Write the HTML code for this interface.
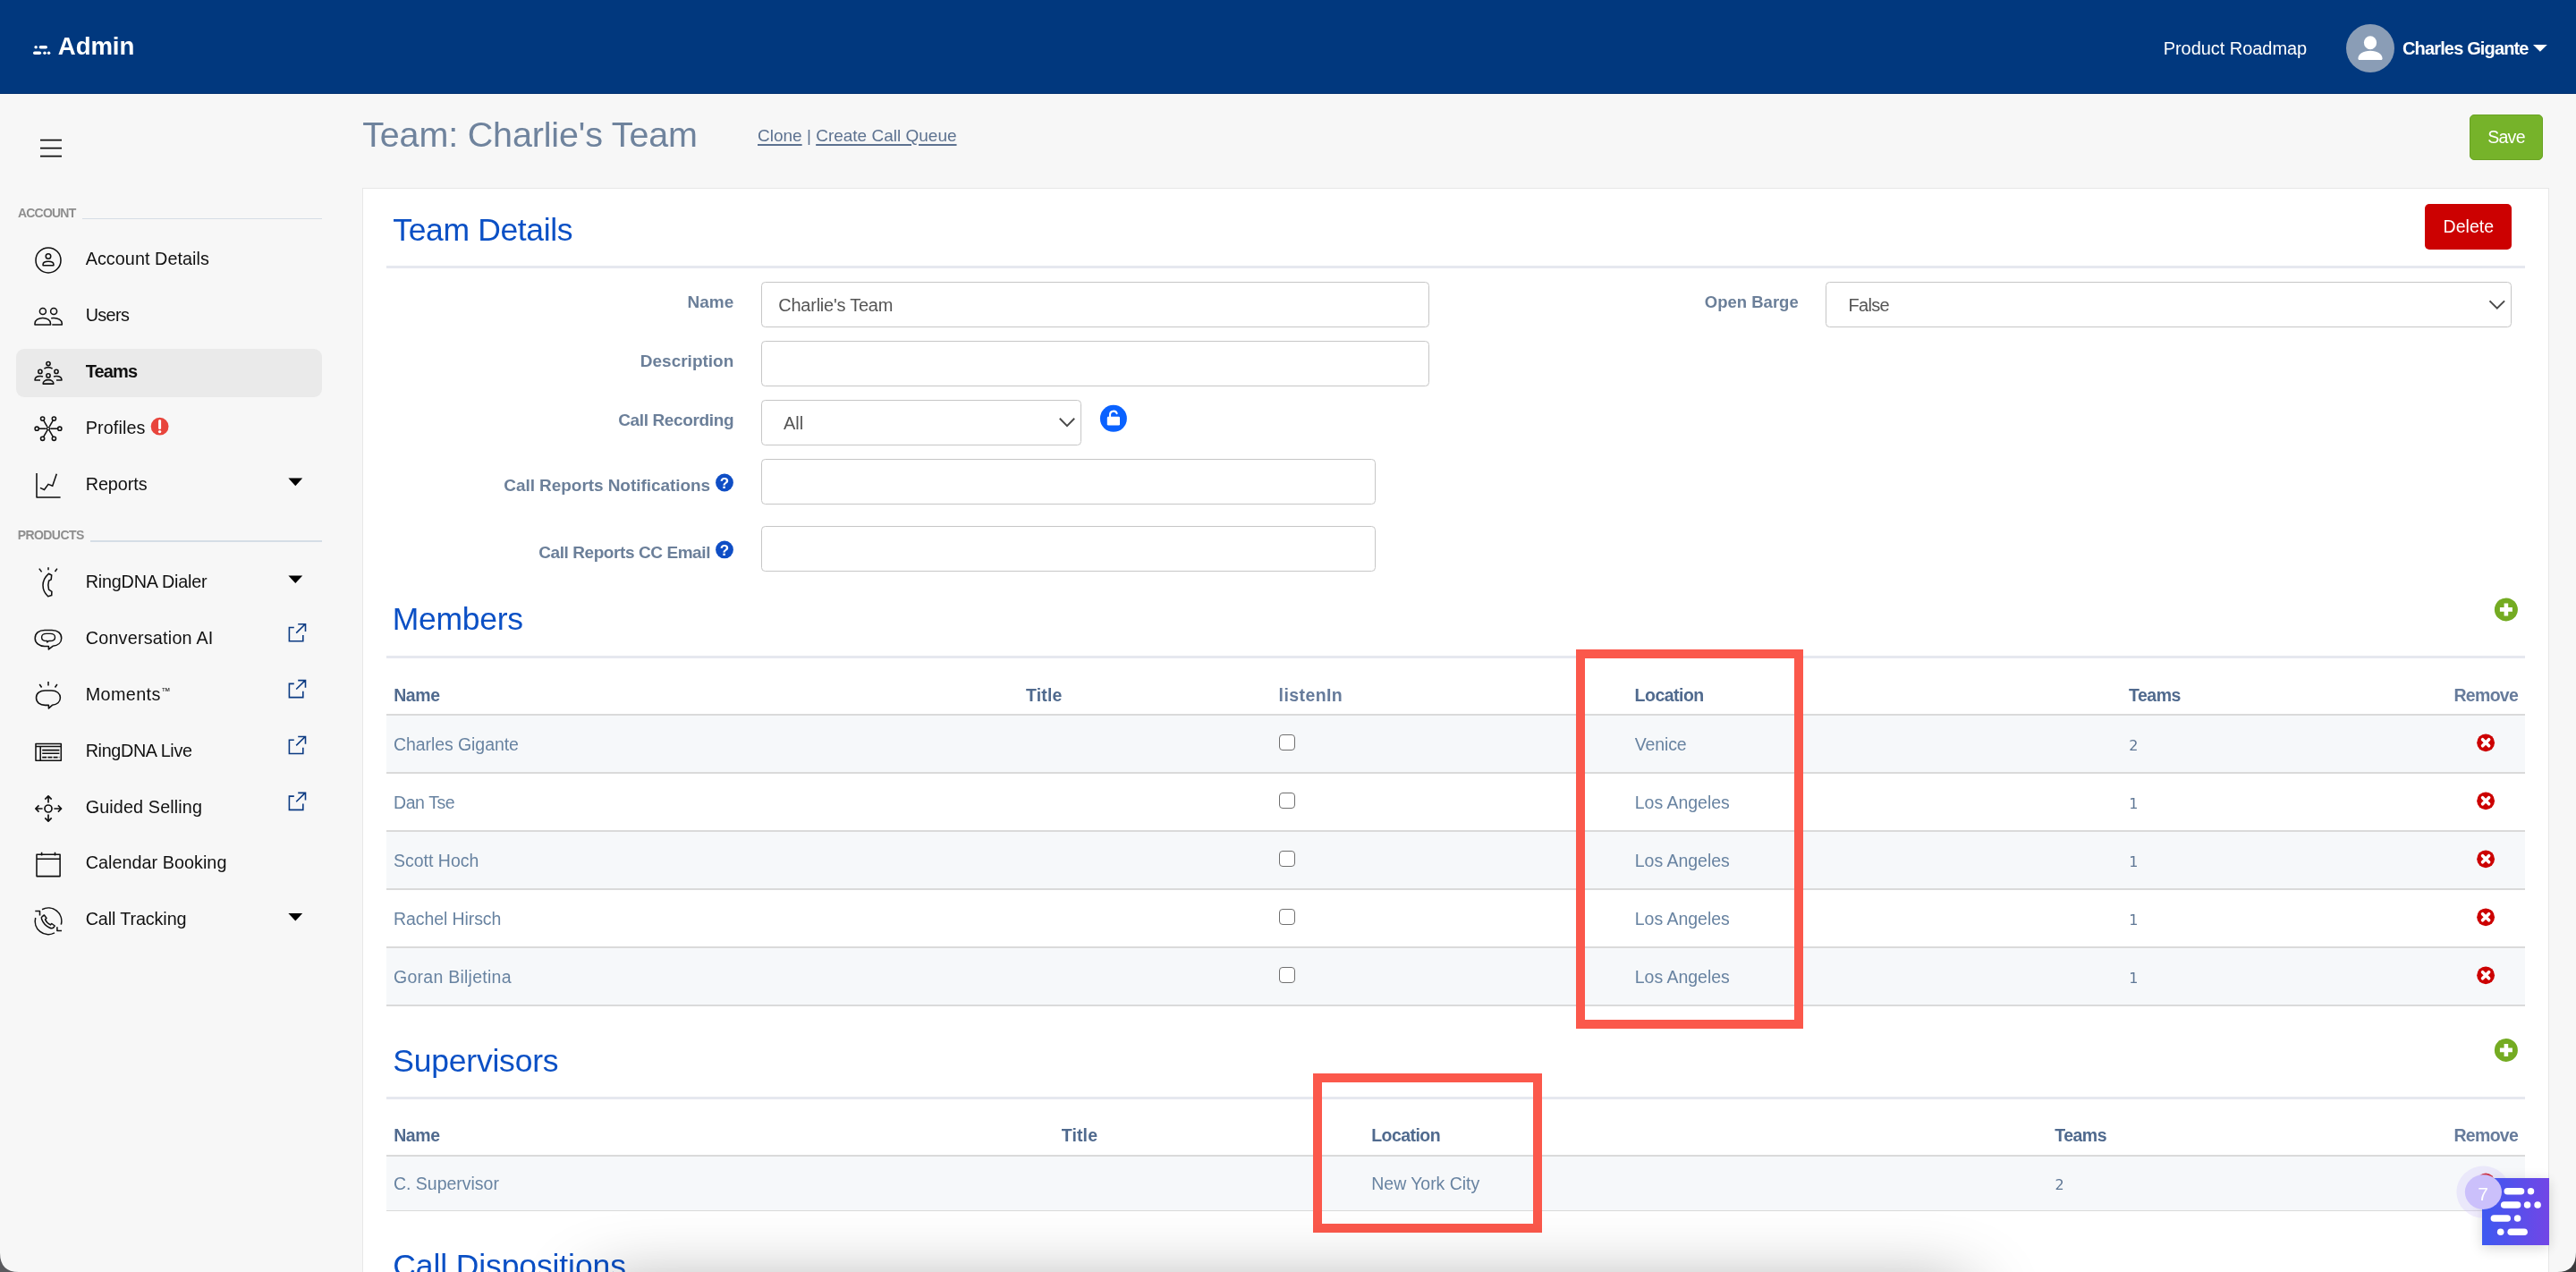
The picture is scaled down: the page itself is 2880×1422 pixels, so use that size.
<!DOCTYPE html>
<html lang="en">
<head>
<meta charset="utf-8">
<title>Team: Charlie's Team - Admin</title>
<style>
html,body{margin:0;padding:0}
body{width:2880px;height:1422px;overflow:hidden;position:relative;background:#f7f7f7;font-family:"Liberation Sans",Arial,sans-serif;}
#app{position:absolute;left:0;top:0;width:2880px;height:1422px;overflow:hidden;will-change:transform;opacity:.9999}
.t{position:absolute;white-space:nowrap;margin:0;padding:0}
.b{position:absolute;box-sizing:border-box}
svg{position:absolute;overflow:visible}
a{color:inherit}

.lk{text-decoration:underline;text-decoration-thickness:1.5px;text-underline-offset:3.2px}
.inp{position:absolute;box-sizing:border-box;background:#fff;border:1px solid #c6c6c6;border-radius:4.5px;height:51px}
.hl{position:absolute;height:3px;background:#e6e8ef;left:432px;width:2391px}
.rl{position:absolute;height:2px;background:#dadada;left:432px;width:2391px}
.row{position:absolute;left:432px;width:2391px;background:#f6f8fa}
.cb{position:absolute;box-sizing:border-box;width:18px;height:18px;border:1.6px solid #6f6f6f;border-radius:4px;background:#fff}

</style>
</head>
<body>
<div id="app">
<div class="b" style="left:0px;top:0px;width:2880px;height:105px;background:#00387e;border-bottom:1px solid #002f70"></div>
<div class="t" style="left:64.8px;top:34.84px;font-size:27.6px;line-height:33px;color:#fff;font-weight:700;letter-spacing:-0.092px;">Admin</div>
<div class="t" style="left:2418.7px;top:42.07px;font-size:20px;line-height:24px;color:#fff;letter-spacing:-0.05px;">Product Roadmap</div>
<div class="b" style="left:2623px;top:27px;width:54px;height:54px;border-radius:50%;background:#8a9db6;overflow:hidden"></div>
<div class="t" style="left:2686px;top:41.67px;font-size:20px;line-height:24px;color:#fff;font-weight:700;letter-spacing:-0.85px;">Charles Gigante</div>
<div class="t" style="left:19.9px;top:229.65px;font-size:14px;line-height:17px;color:#8e8e8e;font-weight:700;letter-spacing:-0.77px;">ACCOUNT</div>
<div class="b" style="left:92px;top:243.5px;width:268px;height:1.5px;background:#d5dde6"></div>
<div class="t" style="left:19.7px;top:589.55px;font-size:14px;line-height:17px;color:#8e8e8e;font-weight:700;letter-spacing:-0.57px;">PRODUCTS</div>
<div class="b" style="left:101px;top:604px;width:259px;height:1.5px;background:#d5dde6"></div>
<div class="b" style="left:18px;top:390px;width:342px;height:54px;background:#eaeaea;border-radius:9px"></div>
<div class="t" style="left:95.7px;top:277.44px;font-size:19.8px;line-height:24px;color:#111;letter-spacing:0.049px;">Account Details</div>
<div class="t" style="left:95.7px;top:340.44px;font-size:19.8px;line-height:24px;color:#111;letter-spacing:-0.641px;">Users</div>
<div class="t" style="left:95.7px;top:403.37px;font-size:20px;line-height:24px;color:#111;font-weight:700;letter-spacing:-0.857px;">Teams</div>
<div class="t" style="left:95.7px;top:466.44px;font-size:19.8px;line-height:24px;color:#111;letter-spacing:0.122px;">Profiles</div>
<div class="t" style="left:95.7px;top:529.44px;font-size:19.8px;line-height:24px;color:#111;letter-spacing:-0.061px;">Reports</div>
<div class="t" style="left:95.7px;top:638.14px;font-size:19.8px;line-height:24px;color:#111;letter-spacing:-0.196px;">RingDNA Dialer</div>
<div class="t" style="left:95.7px;top:700.94px;font-size:19.8px;line-height:24px;color:#111;letter-spacing:0.215px;">Conversation AI</div>
<div class="t" style="left:95.7px;top:763.84px;font-size:19.8px;line-height:24px;color:#111;letter-spacing:0.382px;">Moments<span style="font-size:10.5px;letter-spacing:0;position:relative;top:-7px;left:0.6px">™</span></div>
<div class="t" style="left:95.7px;top:826.64px;font-size:19.8px;line-height:24px;color:#111;letter-spacing:-0.355px;">RingDNA Live</div>
<div class="t" style="left:95.7px;top:889.54px;font-size:19.8px;line-height:24px;color:#111;letter-spacing:0.122px;">Guided Selling</div>
<div class="t" style="left:95.7px;top:952.44px;font-size:19.8px;line-height:24px;color:#111;letter-spacing:0.031px;">Calendar Booking</div>
<div class="t" style="left:95.7px;top:1015.34px;font-size:19.8px;line-height:24px;color:#111;letter-spacing:-0.126px;">Call Tracking</div>
<div class="t" style="left:405.2px;top:127.41px;font-size:39.5px;line-height:47px;color:#6f839d;letter-spacing:-0.161px;">Team: Charlie's Team</div>
<div class="t" style="left:847px;top:139.72px;font-size:19px;line-height:23px;color:#5d7290;"><a class="lk">Clone</a> | <a class="lk">Create Call Queue</a></div>
<div class="b" style="left:2761px;top:128px;width:82px;height:51px;background:#76b32a;border-radius:5px;border:1px solid #6aa324"></div>
<div class="t" style="left:2781.2px;top:142.34px;font-size:19.5px;line-height:23px;color:#fff;letter-spacing:-0.712px;">Save</div>
<div class="b" style="left:405px;top:210px;width:2445px;height:1300px;background:#fff;border:1px solid #e7e7e7"></div>
<div class="t" style="left:439.3px;top:235.50px;font-size:35.5px;line-height:43px;color:#0b50c5;letter-spacing:-0.365px;">Team Details</div>
<div class="hl" style="top:296.5px"></div>
<div class="b" style="left:2711px;top:228px;width:97px;height:51px;background:#cc0000;border-radius:5px"></div>
<div class="t" style="left:2731.6px;top:241.94px;font-size:19.5px;line-height:23px;color:#fff;letter-spacing:0.039px;">Delete</div>
<div class="t" style="right:2059.7px;top:326.32px;font-size:19px;line-height:23px;color:#6b7f99;font-weight:700;">Name</div>
<div class="t" style="right:2059.7px;top:392.32px;font-size:19px;line-height:23px;color:#6b7f99;font-weight:700;">Description</div>
<div class="t" style="right:2059.7px;top:458.32px;font-size:19px;line-height:23px;color:#6b7f99;font-weight:700;letter-spacing:-0.35px;">Call Recording</div>
<div class="t" style="right:2086px;top:530.72px;font-size:19px;line-height:23px;color:#6b7f99;font-weight:700;letter-spacing:-0.06px;">Call Reports Notifications</div>
<div class="t" style="right:2086px;top:605.72px;font-size:19px;line-height:23px;color:#6b7f99;font-weight:700;letter-spacing:-0.42px;">Call Reports CC Email</div>
<div class="t" style="right:869.3px;top:326.99px;font-size:18.5px;line-height:22px;color:#6b7f99;font-weight:700;">Open Barge</div>
<div class="inp" style="left:851px;top:315px;width:747px"></div>
<div class="t" style="left:870.3px;top:329.17px;font-size:20px;line-height:24px;color:#555;letter-spacing:-0.25px;">Charlie's Team</div>
<div class="inp" style="left:851px;top:381px;width:747px"></div>
<div class="inp" style="left:851px;top:447px;width:358px"></div>
<div class="t" style="left:876px;top:461.37px;font-size:20px;line-height:24px;color:#555;">All</div>
<div class="inp" style="left:851px;top:513px;width:687px"></div>
<div class="inp" style="left:851px;top:588px;width:687px"></div>
<div class="inp" style="left:2041px;top:315px;width:767px"></div>
<div class="t" style="left:2066.4px;top:329.17px;font-size:20px;line-height:24px;color:#555;letter-spacing:-0.661px;">False</div>
<div class="t" style="left:438.8px;top:671.20px;font-size:35.5px;line-height:43px;color:#0b50c5;letter-spacing:-0.278px;">Members</div>
<div class="hl" style="top:732.8px"></div>
<div class="t" style="left:440.2px;top:765.54px;font-size:19.5px;line-height:23px;color:#506a8e;font-weight:700;letter-spacing:-0.403px;">Name</div>
<div class="t" style="left:1147px;top:765.54px;font-size:19.5px;line-height:23px;color:#506a8e;font-weight:700;letter-spacing:0.153px;">Title</div>
<div class="t" style="left:1429.6px;top:765.54px;font-size:19.5px;line-height:23px;color:#667b9b;font-weight:700;letter-spacing:0.418px;">listenIn</div>
<div class="t" style="left:1827.6px;top:765.54px;font-size:19.5px;line-height:23px;color:#506a8e;font-weight:700;letter-spacing:-0.518px;">Location</div>
<div class="t" style="left:2380px;top:765.54px;font-size:19.5px;line-height:23px;color:#506a8e;font-weight:700;letter-spacing:-0.508px;">Teams</div>
<div class="t" style="right:64.90000000000009px;top:765.54px;font-size:19.5px;line-height:23px;color:#667b9b;font-weight:700;letter-spacing:-0.711px;">Remove</div>
<div class="row" style="top:799px;height:65px"></div>
<div class="row" style="top:929px;height:65px"></div>
<div class="row" style="top:1059px;height:65px"></div>
<div class="rl" style="top:798px"></div>
<div class="rl" style="top:863px"></div>
<div class="rl" style="top:928px"></div>
<div class="rl" style="top:993px"></div>
<div class="rl" style="top:1058px"></div>
<div class="rl" style="top:1123px"></div>
<div class="t" style="left:440px;top:820.74px;font-size:19.5px;line-height:23px;color:#6883a1;letter-spacing:-0.074px;">Charles Gigante</div>
<div class="t" style="left:1827.8px;top:820.74px;font-size:19.5px;line-height:23px;color:#6883a1;letter-spacing:-0.125px;">Venice</div>
<div class="t" style="left:2380.2px;top:823.96px;font-size:16px;line-height:19px;color:#5f7795;font-family:'DejaVu Sans',sans-serif;">2</div>
<div class="cb" style="left:1430px;top:821px"></div>
<div class="t" style="left:440px;top:885.74px;font-size:19.5px;line-height:23px;color:#6883a1;letter-spacing:-0.412px;">Dan Tse</div>
<div class="t" style="left:1827.8px;top:885.74px;font-size:19.5px;line-height:23px;color:#6883a1;letter-spacing:-0.023px;">Los Angeles</div>
<div class="t" style="left:2380.2px;top:888.96px;font-size:16px;line-height:19px;color:#5f7795;font-family:'DejaVu Sans',sans-serif;">1</div>
<div class="cb" style="left:1430px;top:886px"></div>
<div class="t" style="left:440px;top:950.74px;font-size:19.5px;line-height:23px;color:#6883a1;letter-spacing:-0.008px;">Scott Hoch</div>
<div class="t" style="left:1827.8px;top:950.74px;font-size:19.5px;line-height:23px;color:#6883a1;letter-spacing:-0.023px;">Los Angeles</div>
<div class="t" style="left:2380.2px;top:953.96px;font-size:16px;line-height:19px;color:#5f7795;font-family:'DejaVu Sans',sans-serif;">1</div>
<div class="cb" style="left:1430px;top:951px"></div>
<div class="t" style="left:440px;top:1015.74px;font-size:19.5px;line-height:23px;color:#6883a1;letter-spacing:-0.082px;">Rachel Hirsch</div>
<div class="t" style="left:1827.8px;top:1015.74px;font-size:19.5px;line-height:23px;color:#6883a1;letter-spacing:-0.023px;">Los Angeles</div>
<div class="t" style="left:2380.2px;top:1018.96px;font-size:16px;line-height:19px;color:#5f7795;font-family:'DejaVu Sans',sans-serif;">1</div>
<div class="cb" style="left:1430px;top:1016px"></div>
<div class="t" style="left:440px;top:1080.74px;font-size:19.5px;line-height:23px;color:#6883a1;letter-spacing:0.26px;">Goran Biljetina</div>
<div class="t" style="left:1827.8px;top:1080.74px;font-size:19.5px;line-height:23px;color:#6883a1;letter-spacing:-0.023px;">Los Angeles</div>
<div class="t" style="left:2380.2px;top:1083.96px;font-size:16px;line-height:19px;color:#5f7795;font-family:'DejaVu Sans',sans-serif;">1</div>
<div class="cb" style="left:1430px;top:1081px"></div>
<div class="t" style="left:439.3px;top:1164.90px;font-size:35.5px;line-height:43px;color:#0b50c5;letter-spacing:-0.221px;">Supervisors</div>
<div class="hl" style="top:1225.5px"></div>
<div class="t" style="left:440.2px;top:1258.44px;font-size:19.5px;line-height:23px;color:#506a8e;font-weight:700;letter-spacing:-0.403px;">Name</div>
<div class="t" style="left:1186.7px;top:1258.44px;font-size:19.5px;line-height:23px;color:#506a8e;font-weight:700;letter-spacing:0.153px;">Title</div>
<div class="t" style="left:1533.2px;top:1258.44px;font-size:19.5px;line-height:23px;color:#506a8e;font-weight:700;letter-spacing:-0.556px;">Location</div>
<div class="t" style="left:2297.2px;top:1258.44px;font-size:19.5px;line-height:23px;color:#506a8e;font-weight:700;letter-spacing:-0.508px;">Teams</div>
<div class="t" style="right:64.90000000000009px;top:1258.44px;font-size:19.5px;line-height:23px;color:#667b9b;font-weight:700;letter-spacing:-0.711px;">Remove</div>
<div class="row" style="top:1292px;height:61px"></div>
<div class="rl" style="top:1291px"></div>
<div class="rl" style="top:1353px;height:1px"></div>
<div class="t" style="left:440px;top:1311.64px;font-size:19.5px;line-height:23px;color:#6883a1;letter-spacing:-0.017px;">C. Supervisor</div>
<div class="t" style="left:1533.3px;top:1311.64px;font-size:19.5px;line-height:23px;color:#6883a1;letter-spacing:-0.045px;">New York City</div>
<div class="t" style="left:2297.4px;top:1314.86px;font-size:16px;line-height:19px;color:#5f7795;font-family:'DejaVu Sans',sans-serif;">2</div>
<div class="t" style="left:439.3px;top:1394.20px;font-size:35.5px;line-height:43px;color:#0b50c5;letter-spacing:-0.112px;">Call Dispositions</div>
<div class="b" style="left:2775px;top:1317px;width:75px;height:75px;box-shadow:0 3px 14px rgba(0,0,0,.16)"></div>
<div class="b" style="left:1762px;top:726px;width:254px;height:423.5px;border:10px solid #fb584b"></div>
<div class="b" style="left:1468px;top:1200px;width:256px;height:177.5px;border:10px solid #fb584b"></div>
<div class="b" style="left:660px;top:1442px;width:1545px;height:60px;border-radius:30px;box-shadow:0 0 80px 0 rgba(0,0,0,.42);pointer-events:none"></div>
<svg width="2880" height="1422" viewBox="0 0 2880 1422" style="left:0;top:0;pointer-events:none">
<defs><linearGradient id="wg" x1="0" y1="0" x2="1" y2="0"><stop offset="0" stop-color="#3d59f1"/><stop offset="1" stop-color="#7246e6"/></linearGradient></defs>
<g fill="#fff"><circle cx="40.1" cy="52.8" r="1.75"/><rect x="43.6" y="51.05" width="9.4" height="3.5" rx="1.75"/><rect x="37" y="57.55" width="9.1" height="3.5" rx="1.75"/><circle cx="50" cy="59.3" r="1.75"/><circle cx="54.6" cy="59.3" r="1.75"/></g>
<g fill="#fff"><ellipse cx="2650" cy="47.8" rx="7.1" ry="7.5"/><path d="M2636.4 65.5c0-5.3 5.6-8.8 13.6-8.8s13.6 3.5 13.6 8.8c0 .9-.6 1.5-1.5 1.5h-24.2c-.9 0-1.5-.6-1.5-1.5z"/><path d="M2832 50h15.8l-7.9 7.8z"/></g>
<g stroke="#111" stroke-width="1.8" fill="none"><path d="M45 156.7H69M45 165.7H69M45 174.7H69"/></g>
<g stroke="#111" stroke-width="1.55" fill="none" stroke-linejoin="round" stroke-linecap="butt">
<circle cx="54" cy="290.9" r="14"/><circle cx="54" cy="286.4" r="2.75"/><path d="M48.1 296.8v-1.2c0-2 2.6-3.3 5.9-3.3s5.9 1.3 5.9 3.3v1.2z"/>
<circle cx="47.9" cy="347.9" r="3.5"/><circle cx="60.1" cy="347.9" r="3.5"/><path d="M39 362.9v-1.2c0-3.8 3.9-6.2 8.75-6.2s8.75 2.4 8.75 6.2v1.2z"/><path d="M57.2 355.7c.9-.15 1.9-.2 2.9-.2c4.85 0 9.2 2.4 9.2 6.2v1.2h-11"/>
<circle cx="54" cy="406.5" r="2.1"/><circle cx="44.9" cy="415.4" r="2.1"/><circle cx="63" cy="415.4" r="2.1"/><circle cx="54" cy="419.9" r="2.1"/><path d="M49.4 412.2q4.6-3.2 9.2 0"/><path d="M45 424.9h-6c0-2.9 2.6-4.5 6-4.5c1.1 0 2.1.2 3 .6"/><path d="M63 424.9h6c0-2.9-2.6-4.5-6-4.5c-1.1 0-2.1.2-3 .6"/><path d="M48.1 429.1c0-2.8 2.6-4.5 5.9-4.5s5.9 1.7 5.9 4.5z"/>
<path d="M56.30 479.20L64.70 479.20"/><circle cx="66.80" cy="479.20" r="2.1"/>
<path d="M55.15 481.19L59.35 488.47"/><circle cx="60.40" cy="490.29" r="2.1"/>
<path d="M52.85 481.19L48.65 488.47"/><circle cx="47.60" cy="490.29" r="2.1"/>
<path d="M51.70 479.20L43.30 479.20"/><circle cx="41.20" cy="479.20" r="2.1"/>
<path d="M52.85 477.21L48.65 469.93"/><circle cx="47.60" cy="468.11" r="2.1"/>
<path d="M55.15 477.21L59.35 469.93"/><circle cx="60.40" cy="468.11" r="2.1"/>
<circle cx="54" cy="479.2" r="1.6" stroke-width="1.4"/>
<path d="M41 529V556H67.6"/><path d="M44.9 545.4L49.5 547.5L54 541.4L58.7 543.2L63.3 529.8" stroke-linejoin="miter"/>
<path d="M54 634.2V637.3M43.8 635.6L46.6 639.4M63.9 635.6L61.5 639"/><path d="M54.4 641.3L57.7 643L57.2 647.9L54.6 649.3Q53 654.3 54.6 659.2L57.9 661.3L57.7 665.6L53.7 666.7Q48 661.5 48 654.3Q48 647 54.4 641.3Z"/>
<path d="M50 704.5h8c6.5 0 10.7 3.6 10.7 8.9c0 5-4 8.4-9.7 8.9l-4.6 3.6v-3.5h-4.4c-6.5 0-10.8-3.7-10.8-9s4.3-8.9 10.8-8.9z"/><path d="M52 708.4h4c3.4 0 5.5 1.6 5.5 4c0 2.5-2.1 4.1-5.5 4.1h-1.5l-1.7 1.6v-1.6h-.8c-3.4 0-5.4-1.6-5.4-4.1c0-2.4 2-4 5.4-4z" stroke-width="1.4"/>
<path d="M54 762V766.4M44.2 765L46.6 768.5M63.9 765L61.5 768.5"/><path d="M50.5 772h7c6 0 9.9 3.3 9.9 8.1c0 4.6-3.7 7.7-9 8.2l-4 3.6v-3.5h-3.9c-6 0-10-3.4-10-8.3s4-8.1 10-8.1z"/>
<rect x="40" y="831.4" width="28.3" height="18.9"/><path d="M40 834.4H68.3M45.2 834.4V850.3M47.2 838.6H66.4M47.2 842.2H66.4"/><path d="M47.2 846.6H66.4" stroke-dasharray="5 1.2"/>
<circle cx="54" cy="904" r="4" stroke-width="1.7"/><path stroke-width="1.7" d="M54 897.6V889.9M50.3 893.6L54 889.9L57.7 893.6M54 910.4V918.1M50.3 914.4L54 918.1L57.7 914.4M47.6 904H39.8M43.5 900.3L39.8 904L43.5 907.7M60.4 904H68.6M64.9 900.3L68.6 904L64.9 907.7"/>
<rect x="41" y="955.3" width="26.1" height="24.3"/><path d="M41 960.2H67.1M46.6 952.7V956.6M61.5 952.7V956.6"/>
<path d="M47.05 1016.7A14.8 14.8 0 0 1 68.3 1033.6"/><path d="M60.95 1042.9A14.8 14.8 0 0 1 39.7 1026"/><path d="M39.3 1018.5H44.5V1023.5M63.9 1036.2V1040.4H69"/><path d="M47.2 1024.6l2.2-1.6l2.6 3.4l-1.5 1.4c1 2.6 3.2 4.8 5.9 6.1l1.4-1.4l3.4 2.5l-1.6 2.2c-1 .9-2.7.6-4.4-.2c-3.9-1.9-7.1-5.4-8.6-9.5c-.5-1.3-.4-2.3.6-2.9z"/>
</g>
<path fill="#000" d="M322.4 534.6h15.8l-7.9 8.6z"/>
<path fill="#000" d="M322.4 643.4h15.8l-7.9 8.6z"/>
<path fill="#000" d="M322.4 1021h15.8l-7.9 8.6z"/>
<g stroke="#0b3a82" stroke-width="1.6" fill="none">
<path d="M328.8 701.50H323.4V716.80H338.8V710.00M331.2 707.60L341.2 697.80M333.2 697.80H341.5V705.90"/>
<path d="M328.8 764.37H323.4V779.67H338.8V772.87M331.2 770.47L341.2 760.67M333.2 760.67H341.5V768.77"/>
<path d="M328.8 827.24H323.4V842.54H338.8V835.74M331.2 833.34L341.2 823.54M333.2 823.54H341.5V831.64"/>
<path d="M328.8 890.11H323.4V905.41H338.8V898.61M331.2 896.21L341.2 886.41M333.2 886.41H341.5V894.51"/>
</g>
<circle cx="178.6" cy="476.7" r="9.9" fill="#e8453c"/><path d="M178.6 470.6V478.6" stroke="#fff" stroke-width="3" stroke-linecap="round"/><circle cx="178.6" cy="482.6" r="1.7" fill="#fff"/>
<g stroke="#4a4a4a" stroke-width="2" fill="none"><path d="M1184.8 467.8L1193 476.1L1201.2 467.8"/><path d="M2783.5 336.4L2791.8 344.6L2800.1 336.4"/></g>
<circle cx="1244.9" cy="467.8" r="15" fill="#0a62ff"/><rect x="1237.8" y="465.7" width="14.2" height="9.9" rx="1.4" fill="#fff"/><path d="M1241 466.5V463.6a3.95 3.95 0 0 1 7.65-1.4" stroke="#fff" stroke-width="2.1" fill="none" stroke-linecap="round"/>
<circle cx="810" cy="539.5" r="9.9" fill="#0f4ec5"/><text x="810" y="545.6" text-anchor="middle" font-family="Liberation Sans,Arial,sans-serif" font-weight="700" font-size="17" fill="#fff">?</text>
<circle cx="810" cy="614.4" r="9.9" fill="#0f4ec5"/><text x="810" y="620.5" text-anchor="middle" font-family="Liberation Sans,Arial,sans-serif" font-weight="700" font-size="17" fill="#fff">?</text>
<circle cx="2801.9" cy="681.4" r="13" fill="#74ab22"/><path d="M2794.9 681.4H2808.9M2801.9 674.4V688.4" stroke="#fff" stroke-width="4.6" stroke-linecap="butt"/>
<circle cx="2801.9" cy="1173.9" r="13" fill="#74ab22"/><path d="M2794.9 1173.9H2808.9M2801.9 1166.9V1180.9" stroke="#fff" stroke-width="4.6" stroke-linecap="butt"/>
<circle cx="2779.1" cy="830.3" r="9.9" fill="#cc0000"/><path d="M2775.6 826.8L2782.6 833.8M2782.6 826.8L2775.6 833.8" stroke="#fff" stroke-width="3.7" stroke-linecap="round"/>
<circle cx="2779.1" cy="895.3" r="9.9" fill="#cc0000"/><path d="M2775.6 891.8L2782.6 898.8M2782.6 891.8L2775.6 898.8" stroke="#fff" stroke-width="3.7" stroke-linecap="round"/>
<circle cx="2779.1" cy="960.3" r="9.9" fill="#cc0000"/><path d="M2775.6 956.8L2782.6 963.8M2782.6 956.8L2775.6 963.8" stroke="#fff" stroke-width="3.7" stroke-linecap="round"/>
<circle cx="2779.1" cy="1025.3" r="9.9" fill="#cc0000"/><path d="M2775.6 1021.8L2782.6 1028.8M2782.6 1021.8L2775.6 1028.8" stroke="#fff" stroke-width="3.7" stroke-linecap="round"/>
<circle cx="2779.1" cy="1090.3" r="9.9" fill="#cc0000"/><path d="M2775.6 1086.8L2782.6 1093.8M2782.6 1086.8L2775.6 1093.8" stroke="#fff" stroke-width="3.7" stroke-linecap="round"/>
<circle cx="2779.1" cy="1321.3" r="9.9" fill="#cc0000"/><path d="M2775.6 1317.8L2782.6 1324.8M2782.6 1317.8L2775.6 1324.8" stroke="#fff" stroke-width="3.7" stroke-linecap="round"/>
<ellipse cx="2776.4" cy="1332.6" rx="30" ry="29" fill="#cbc0fb" fill-opacity=".28"/>
<rect x="2775" y="1317" width="75" height="75" fill="url(#wg)"/>
<g fill="#fff"><rect x="2799.5" y="1328.1" width="22.8" height="7.5" rx="3.75"/><circle cx="2829.5" cy="1331.8" r="3.75"/><rect x="2795.9" y="1343.2" width="22.5" height="7.6" rx="3.8"/><circle cx="2825.6" cy="1347" r="3.8"/><circle cx="2837.1" cy="1347" r="3.8"/><rect x="2784.6" y="1358.2" width="22.4" height="7.6" rx="3.8"/><circle cx="2814.6" cy="1362" r="3.8"/><circle cx="2795.7" cy="1377.2" r="3.8"/><rect x="2803.4" y="1373.4" width="22.5" height="7.6" rx="3.8"/></g>
<ellipse cx="2776.4" cy="1332.6" rx="20.6" ry="19.4" fill="#cbc0fb"/>
<text x="2776" y="1341.6" text-anchor="middle" font-family="Liberation Sans,Arial,sans-serif" font-size="21" fill="#fff">7</text>
<path d="M0 1400.5V1422H21Q0 1422 0 1400.5Z" fill="#5b5b5f"/><path d="M2880 1400V1422H2859Q2880 1422 2880 1400Z" fill="#3b3b3d"/>
</svg>
</div>
</body>
</html>
